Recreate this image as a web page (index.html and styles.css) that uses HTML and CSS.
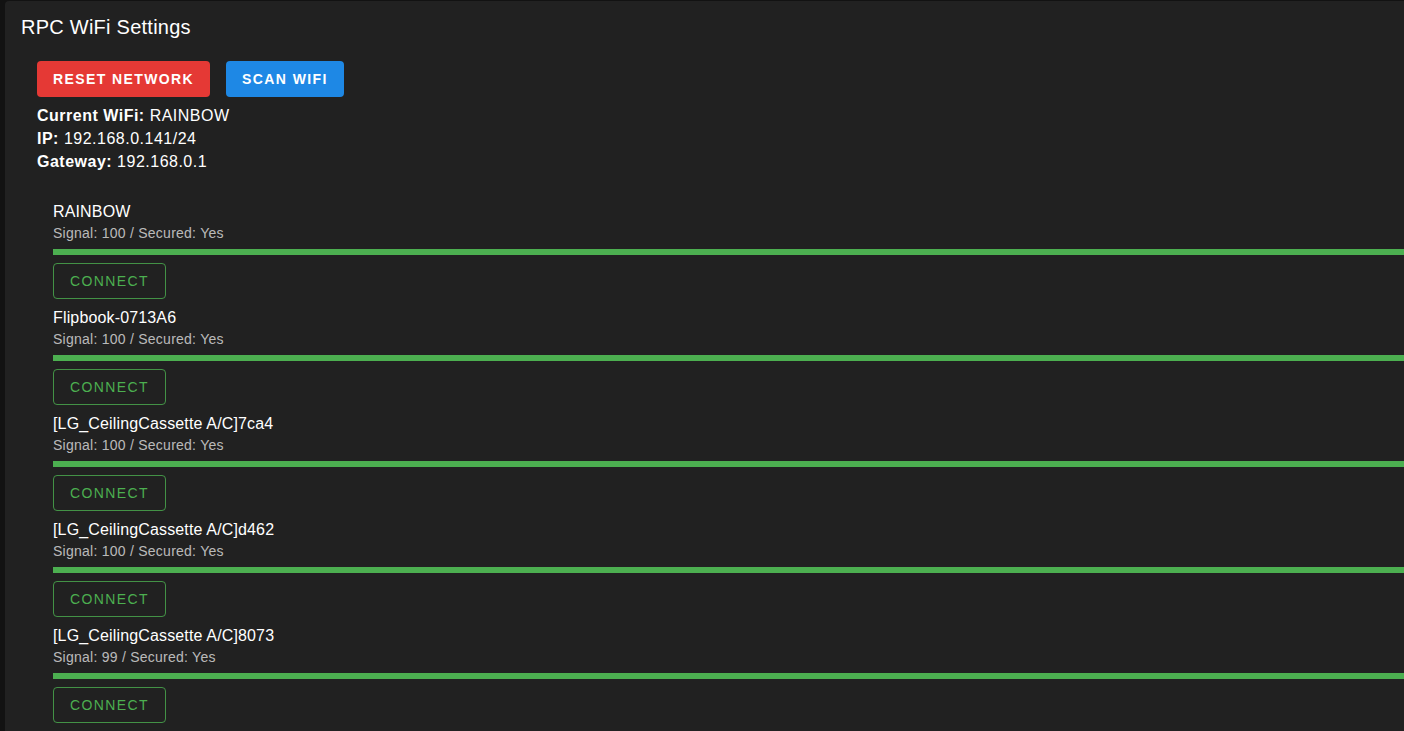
FILE: index.html
```html
<!DOCTYPE html>
<html>
<head>
<meta charset="utf-8">
<link rel="stylesheet" href="styles.css">
</head>
<body>
<div class="card">
  <h1 class="title">RPC WiFi Settings</h1>
  <div class="content">
    <div class="actions">
      <button class="btn btn-red">Reset Network</button>
      <button class="btn btn-blue">Scan WiFi</button>
    </div>
    <div class="info">
      <div><b>Current WiFi:</b> RAINBOW</div>
      <div><b>IP:</b> 192.168.0.141/24</div>
      <div><b>Gateway:</b> 192.168.0.1</div>
    </div>
    <div class="list">
      <div class="item">
        <div class="name">RAINBOW</div>
        <div class="meta">Signal: 100 / Secured: Yes</div>
        <div class="bar"><div class="fill" style="width:100%"></div></div>
        <button class="connect">Connect</button>
      </div>
      <div class="item">
        <div class="name">Flipbook-0713A6</div>
        <div class="meta">Signal: 100 / Secured: Yes</div>
        <div class="bar"><div class="fill" style="width:100%"></div></div>
        <button class="connect">Connect</button>
      </div>
      <div class="item">
        <div class="name">[LG_CeilingCassette A/C]7ca4</div>
        <div class="meta">Signal: 100 / Secured: Yes</div>
        <div class="bar"><div class="fill" style="width:100%"></div></div>
        <button class="connect">Connect</button>
      </div>
      <div class="item">
        <div class="name">[LG_CeilingCassette A/C]d462</div>
        <div class="meta">Signal: 100 / Secured: Yes</div>
        <div class="bar"><div class="fill" style="width:100%"></div></div>
        <button class="connect">Connect</button>
      </div>
      <div class="item">
        <div class="name">[LG_CeilingCassette A/C]8073</div>
        <div class="meta">Signal: 99 / Secured: Yes</div>
        <div class="bar"><div class="fill" style="width:99%"></div></div>
        <button class="connect">Connect</button>
      </div>
    </div>
  </div>
</div>
</body>
</html>
```

FILE: styles.css
```css
html, body {
  margin: 0;
  padding: 0;
  overflow: hidden;
  background: #121212;
  height: 100%;
}
body {
  padding: 1px 0 0 5px;
  font-family: "Liberation Sans", Arial, sans-serif;
  color: #fff;
}
.card {
  background: #212121;
  width: 1500px;
  min-height: 800px;
  border-radius: 4px 0 0 0;
  padding: 12px 16px 16px 16px;
  box-sizing: border-box;
}
.title {
  margin: 0;
  font-weight: 400;
  font-size: 20px;
  line-height: 28px;
  letter-spacing: 0.25px;
}
.content {
  padding: 20px 16px 0 16px;
}
.actions {
  display: flex;
  gap: 16px;
}
.btn {
  border: none;
  border-radius: 4px;
  height: 36px;
  padding: 0 16px;
  color: #fff;
  font-family: "Liberation Sans", Arial, sans-serif;
  font-weight: 700;
  font-size: 14px;
  letter-spacing: 1.4px;
  text-transform: uppercase;
}
.btn-red { background: #e53935; }
.btn-blue { background: #1e88e5; }
.info {
  margin-top: 7px;
  font-size: 16px;
  line-height: 23px;
  letter-spacing: 0.5px;
}
.info b { font-weight: 700; }
.list {
  margin-top: 27px;
  padding-left: 16px;
}
.item {
  display: flex;
  flex-direction: column;
  align-items: flex-start;
  padding-bottom: 7px;
}
.name {
  font-size: 16px;
  line-height: 24px;
  letter-spacing: 0.15px;
}
.meta {
  font-size: 14px;
  line-height: 20px;
  letter-spacing: 0.25px;
  color: rgba(255,255,255,0.7);
  margin-top: -1px;
}
.bar {
  align-self: stretch;
  margin-top: 6px;
  height: 6px;
  background: rgba(76,175,80,0.3);
}
.fill {
  height: 100%;
  background: #4caf50;
}
.connect {
  margin-top: 8px;
  height: 36px;
  padding: 0 16px;
  background: transparent;
  border: 1px solid rgba(76,175,80,0.8);
  border-radius: 4px;
  color: #4caf50;
  font-family: "Liberation Sans", Arial, sans-serif;
  font-weight: 400;
  font-size: 14px;
  letter-spacing: 1.4px;
  text-transform: uppercase;
}
```
